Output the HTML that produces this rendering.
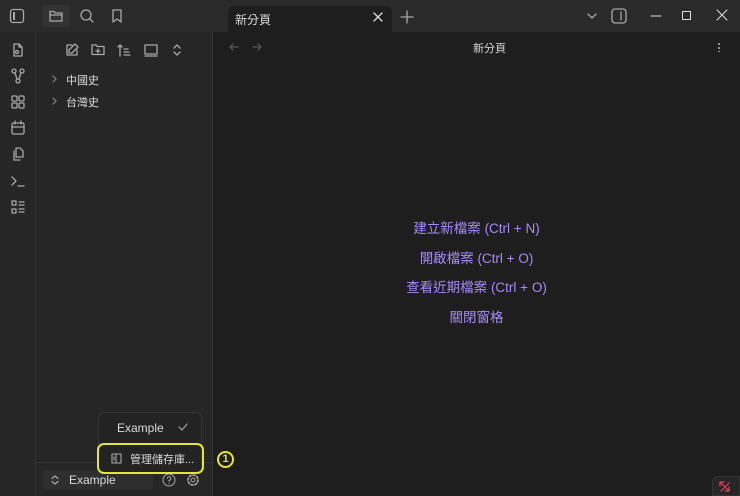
<!DOCTYPE html><html><head><meta charset="utf-8"><style>
*{box-sizing:border-box;margin:0;padding:0}
body{width:740px;height:496px;background:#1e1e1e;font-family:"Liberation Sans","Noto Sans CJK TC",sans-serif;overflow:hidden;position:relative;color:#dadada}
.abs{position:absolute}
svg{position:absolute;fill:none;stroke:#a8a8a8;stroke-width:1.3;stroke-linecap:round;stroke-linejoin:round}
.t{font-size:11px;color:#dadada}
a{color:#a68af9;text-decoration:none}
</style></head><body>
<div class="abs" style="left:0;top:0;width:740px;height:32px;background:#2a2a2a"></div>
<div class="abs" style="left:0;top:32px;width:36px;height:464px;background:#262626;border-right:1px solid #333"></div>
<div class="abs" style="left:36px;top:32px;width:177px;height:464px;background:#262626;border-right:1px solid #333"></div>
<svg style="left:9px;top:8px" width="16" height="16" viewBox="0 0 16 16"><rect x="1.5" y="1.5" width="13" height="13" rx="2.5"/><rect x="4" y="4" width="2" height="8" fill="#a8a8a8" stroke="none"/></svg>
<div class="abs" style="left:42px;top:5px;width:28px;height:22px;background:#333;border-radius:4px"></div>
<svg style="left:48px;top:8px" width="16" height="16" viewBox="0 0 16 16"><path d="M2 3.5h4l1.5 1.5H14v8H2z M2 7h12"/></svg>
<svg style="left:79px;top:8px" width="16" height="16" viewBox="0 0 16 16"><circle cx="7" cy="7" r="5"/><path d="M11 11l3 3"/></svg>
<svg style="left:109px;top:8px" width="16" height="16" viewBox="0 0 16 16"><path d="M4 2h8v12l-4-3-4 3z"/></svg>
<div class="abs" style="left:228px;top:6px;width:164px;height:26px;background:#1e1e1e;border-radius:6px 6px 0 0"></div>
<div class="abs t" style="left:235px;top:11px;font-size:12px">新分頁</div>
<svg style="left:372px;top:11px" width="12" height="12" viewBox="0 0 12 12"><path d="M2 2l8 8M10 2l-8 8" stroke="#ddd"/></svg>
<svg style="left:400px;top:10px" width="14" height="14" viewBox="0 0 14 14"><path d="M7 1v12M1 7h12"/></svg>
<svg style="left:586px;top:10px" width="12" height="12" viewBox="0 0 12 12"><path d="M2 4l4 4 4-4"/></svg>
<svg style="left:611px;top:8px" width="16" height="16" viewBox="0 0 16 16"><rect x="1" y="1" width="14" height="14" rx="3"/><path d="M10 4v8"/></svg>
<svg style="left:650px;top:10px" width="12" height="12" viewBox="0 0 12 12"><path d="M1 6h10" stroke="#ddd" stroke-width="1"/></svg>
<svg style="left:681px;top:10px" width="12" height="12" viewBox="0 0 12 12"><rect x="1.5" y="1.5" width="8" height="8" stroke="#ddd" stroke-width="1"/></svg>
<svg style="left:716px;top:9px" width="12" height="12" viewBox="0 0 12 12"><path d="M1 1l10 10M11 1L1 11" stroke="#ddd" stroke-width="1"/></svg>
<svg style="left:10px;top:42px" width="16" height="16" viewBox="0 0 16 16"><path d="M4 14h8V5l-3-3H4z M9 2v3h3"/><circle cx="7" cy="10" r="1.5"/></svg>
<svg style="left:10px;top:68px" width="16" height="16" viewBox="0 0 16 16"><circle cx="4" cy="3" r="2"/><circle cx="12" cy="3" r="2"/><circle cx="8" cy="13" r="2"/><path d="M5 5l2 6M11 5l-2 6"/></svg>
<svg style="left:10px;top:94px" width="16" height="16" viewBox="0 0 16 16"><rect x="2" y="2" width="5" height="5" rx="1"/><rect x="9" y="2" width="5" height="5" rx="1"/><rect x="2" y="9" width="5" height="5" rx="1"/><rect x="9" y="9" width="5" height="5" rx="1"/></svg>
<svg style="left:10px;top:120px" width="16" height="16" viewBox="0 0 16 16"><rect x="2" y="3" width="12" height="11" rx="1.5"/><path d="M5 1v3M11 1v3M2 7h12"/></svg>
<svg style="left:10px;top:146px" width="16" height="16" viewBox="0 0 16 16"><path d="M6 2h4l3 3v6H6z M4 5v9h6"/></svg>
<svg style="left:10px;top:173px" width="16" height="16" viewBox="0 0 16 16"><path d="M2 4l4 4-4 4M8 13h6"/></svg>
<svg style="left:10px;top:199px" width="16" height="16" viewBox="0 0 16 16"><rect x="2" y="2" width="4" height="4"/><rect x="2" y="10" width="4" height="4"/><path d="M9 3h5M9 6h5M9 10h5M9 13h5"/></svg>
<svg style="left:64px;top:42px" width="16" height="16" viewBox="0 0 16 16"><path d="M13 8v5H3V3h5M11 2l3 3-6 6H5V8z"/></svg>
<svg style="left:90px;top:42px" width="16" height="16" viewBox="0 0 16 16"><path d="M2 3h4l1.5 1.5H14v8H2z M8 7v4M6 9h4"/></svg>
<svg style="left:116px;top:42px" width="16" height="16" viewBox="0 0 16 16"><path d="M4 14V3M2 5l2-2 2 2M8 7h4M8 10h5M8 13h6"/></svg>
<svg style="left:143px;top:42px" width="16" height="16" viewBox="0 0 16 16"><rect x="2" y="3" width="12" height="9"/><path d="M2 14h12"/></svg>
<svg style="left:169px;top:42px" width="16" height="16" viewBox="0 0 16 16"><path d="M5 6l3-3 3 3M5 10l3 3 3-3"/></svg>
<svg style="left:50px;top:74px" width="10" height="10" viewBox="0 0 10 10"><path d="M3 2l3 3-3 3" stroke="#777"/></svg>
<div class="abs t" style="left:66px;top:72px">中國史</div>
<svg style="left:50px;top:96px" width="10" height="10" viewBox="0 0 10 10"><path d="M3 2l3 3-3 3" stroke="#777"/></svg>
<div class="abs t" style="left:66px;top:94px">台灣史</div>
<svg style="left:228px;top:41px" width="12" height="12" viewBox="0 0 12 12"><path d="M10 6H2M5 3L2 6l3 3" stroke="#555"/></svg>
<svg style="left:251px;top:41px" width="12" height="12" viewBox="0 0 12 12"><path d="M2 6h8M7 3l3 3-3 3" stroke="#555"/></svg>
<div class="abs t" style="left:473px;top:40px">新分頁</div>
<div class="abs" style="left:718px;top:42px;width:2px;height:10px;background:radial-gradient(circle,#bbb 1px,transparent 1px) 0 0/2px 4px"></div>
<div class="abs" style="left:213px;top:214px;width:527px;text-align:center;font-size:13.5px;line-height:29.7px">
<a>建立新檔案 (Ctrl + N)</a><br><a>開啟檔案 (Ctrl + O)</a><br><a>查看近期檔案 (Ctrl + O)</a><br><a>關閉窗格</a></div>
<div class="abs" style="left:36px;top:462px;width:177px;height:1px;background:#333"></div>
<div class="abs" style="left:43px;top:470px;width:110px;height:20px;background:#2e2e2e;border-radius:4px"></div>
<svg style="left:50px;top:475px" width="10" height="10" viewBox="0 0 10 10"><path d="M2 3.5l3-2.5 3 2.5M2 6.5l3 2.5 3-2.5" stroke-width="1.2"/></svg>
<div class="abs t" style="left:69px;top:473px;font-size:12px">Example</div>
<svg style="left:162px;top:473px" width="14" height="14" viewBox="0 0 14 14"><circle cx="7" cy="7" r="6" stroke-width="1"/><path d="M5.3 5.3a1.8 1.8 0 1 1 1.7 2V8.5M7 10.3v.2" stroke-width="1"/></svg>
<svg style="left:186px;top:473px" width="14" height="14" viewBox="0 0 14 14"><circle cx="7" cy="7" r="2" stroke-width="1"/><circle cx="7" cy="7" r="5" stroke-width="1.6" stroke-dasharray="2 1.9"/></svg>
<div class="abs" style="left:98px;top:412px;width:104px;height:62px;background:#232323;border:1px solid #363636;border-radius:6px"></div>
<div class="abs t" style="left:117px;top:421px;font-size:12px">Example</div>
<svg style="left:177px;top:421px" width="12" height="12" viewBox="0 0 12 12"><path d="M2 6l3 3 5-6" stroke-width="1.1"/></svg>
<div class="abs" style="left:97px;top:443px;width:107px;height:31px;border:2px solid #e4e43a;border-radius:7px"></div>
<svg style="left:110px;top:452px" width="13" height="13" viewBox="0 0 13 13"><path d="M2 2h9v9H2zM6 2v9M4 5v3" stroke-width="1.1"/></svg>
<div class="abs t" style="left:130px;top:451px">管理儲存庫...</div>
<div class="abs" style="left:217px;top:451px;width:17px;height:17px;border:2px solid #e4e43a;border-radius:50%;color:#e4e43a;font-size:11px;font-weight:bold;text-align:center;line-height:13px">1</div>
<div class="abs" style="left:712px;top:476px;width:28px;height:20px;background:#262626;border-radius:6px 0 0 0;border:1px solid #333"></div>
<svg style="left:718px;top:480px" width="13" height="13" viewBox="0 0 13 13"><path d="M2 2l9 9M2 6V2h4M11 7v4H7M3 11l8-8" stroke="#e0445a" stroke-width="1.2"/></svg>
</body></html>
